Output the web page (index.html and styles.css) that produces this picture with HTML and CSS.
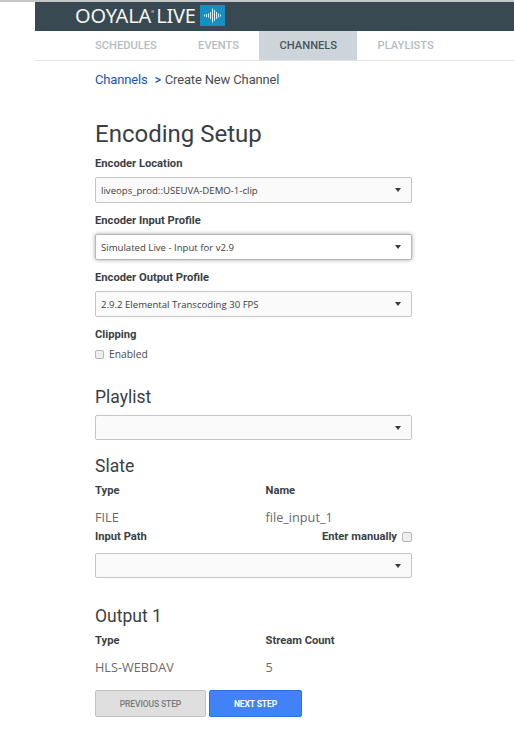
FILE: index.html
```html
<!DOCTYPE html>
<html lang="en">
<head>
<meta charset="utf-8">
<title>Create New Channel</title>
<link rel="stylesheet" href="styles.css">
</head>
<body>
<div class="topline"></div>
<div class="shell">
  <header class="brandbar">
    <span class="logo-text">OOYALA<sup class="reg">®</sup> LIVE</span>
    <span class="logo-mark">
      <svg width="25" height="21" viewBox="0 0 25 21" aria-hidden="true">
        <g stroke="#d5eef8" stroke-width="1" fill="none">
          <path d="M4.500 9.500v2M6.500 9v3M8.500 8.500v4M10.500 7v7M12.500 3.500v14M14.500 5v11M16.500 7v7M18.500 8.500v4M20.500 9.500v2"/>
        </g>
      </svg>
    </span>
  </header>
  <nav class="tabs">
    <a class="tab">SCHEDULES</a>
    <a class="tab">EVENTS</a>
    <a class="tab tab-active">CHANNELS</a>
    <a class="tab">PLAYLISTS</a>
  </nav>
</div>
<main class="content">
  <div class="crumbs"><a class="crumb-link">Channels</a><span class="crumb-sep">&gt;</span><span>Create New Channel</span></div>

  <h1 class="title">Encoding Setup</h1>
  <label class="label">Encoder Location</label>
  <div class="select"><span>liveops_prod::USEUVA-DEMO-1-clip</span><i class="caret"></i></div>
  <label class="label">Encoder Input Profile</label>
  <div class="select select-focus"><span>Simulated Live - Input for v2.9</span><i class="caret"></i></div>
  <label class="label">Encoder Output Profile</label>
  <div class="select"><span>2.9.2 Elemental Transcoding 30 FPS</span><i class="caret"></i></div>
  <label class="label">Clipping</label>
  <div class="check-row"><i class="check"></i><span>Enabled</span></div>

  <h2 class="heading heading-playlist">Playlist</h2>
  <div class="select select-empty"><i class="caret"></i></div>

  <h2 class="heading heading-slate">Slate</h2>
  <div class="pair pair-head"><span>Type</span><span>Name</span></div>
  <div class="pair pair-value"><span>FILE</span><span>file_input_1</span></div>
  <div class="path-row"><span>Input Path</span><span class="manual">Enter manually<i class="check"></i></span></div>
  <div class="select select-empty"><i class="caret"></i></div>

  <h2 class="heading heading-output">Output 1</h2>
  <div class="pair pair-head"><span>Type</span><span>Stream Count</span></div>
  <div class="pair pair-value"><span>HLS-WEBDAV</span><span>5</span></div>
  <div class="actions">
    <button class="btn btn-prev" type="button">PREVIOUS STEP</button>
    <button class="btn btn-next" type="button">NEXT STEP</button>
  </div>
</main>
</body>
</html>
```
FILE: styles.css
```css
* { box-sizing: border-box; }
html, body { margin: 0; padding: 0; background: #fff; }
body { font-family: Roboto, sans-serif; color: #3a3f44; overflow: hidden; height: 741px; }
.topline { height: 2px; background: #c4c6c7; }
.shell { margin-left: 35px; }
.brandbar { height: 29px; background: #394951; display: flex; align-items: flex-start; padding-left: 40px; }
.logo-text { font-family: "Noto Sans", sans-serif; font-weight: 400; font-size: 20px; letter-spacing: -0.200px; word-spacing: -2px; color: #f3f5f5; line-height: 28px; white-space: nowrap; }
.reg { font-size: 4px; vertical-align: 10px; line-height: 0; margin-right: -1px; }
.logo-mark { width: 25px; height: 21px; margin-left: 4px; margin-top: 3px; background: #1590c0; display: block; }
.logo-mark svg { display: block; }
.tabs { height: 30px; display: flex; border-bottom: 1px solid #e2e4e5; padding-left: 40px; }
.tab { height: 29px; padding: 0 20.250px; font-size: 11.150px; font-weight: 500; line-height: 29px; color: #b4bdc2; }
.tab:first-child { padding-left: 20px; padding-right: 21px; }
.tab-active { background: #cdd5da; color: #46555f; }
.content { margin-left: 95px; width: 317px; }
.crumbs { margin-top: 10px; height: 18px; font-size: 13px; letter-spacing: -0.150px; line-height: 18px; color: #4a4d50; display: flex; }
.crumb-link { color: #1a56b0; }
.crumb-sep { margin: 0 4px 0 7px; color: #1a56b0; font-size: 12px; font-weight: 500; }
.title { margin: 30px 0 7px; font-size: 24px; font-weight: 400; line-height: 30px; color: #3a3f44; }
.label { display: block; margin: 0; font-size: 11.200px; font-weight: 700; line-height: 16px; color: #3a3f44; }
.select { height: 26px; margin-top: 5px; margin-bottom: 10px; border: 1px solid #c3c5c6; border-radius: 2px; background: #fafafa; padding: 0 6px 0 5px; display: flex; align-items: center; justify-content: space-between; font-family: "Open Sans", sans-serif; font-size: 9.600px; color: #3d3d3d; }
.select-focus { border-color: #b5b7b8; box-shadow: 0 0 4px rgba(0, 0, 0, 0.350); background: #fff; }
.select-empty { justify-content: flex-end; }
.caret { width: 0; height: 0; border-left: 3px solid transparent; border-right: 3px solid transparent; border-top: 4px solid #3a3a3a; margin-right: 4.500px; }
.check-row { display: flex; align-items: center; height: 14px; margin-top: 4px; font-family: "Open Sans", sans-serif; font-size: 10.300px; color: #4a4a4a; gap: 5px; }
.check { display: block; width: 9px; height: 9px; border: 1px solid #b4b4b4; border-radius: 2px; background: #eeeeee; }
.heading { margin: 0; font-size: 17.500px; font-weight: 400; line-height: 24px; color: #3a3f44; }
.heading-playlist { margin-top: 24px; }
.heading-slate { margin-top: 14px; }
.heading-output { margin-top: 26px; }
.heading-playlist + .select { height: 25px; margin-top: 6px; margin-bottom: 0; }
.pair { display: grid; grid-template-columns: 170.500px 1fr; }
.pair-head { margin-top: 5px; font-size: 11.200px; font-weight: 700; line-height: 16px; color: #3a3f44; }
.pair-value { margin-top: 10px; font-family: "Open Sans", sans-serif; font-size: 12.700px; line-height: 16px; color: #6a6a6a; }
.path-row { display: flex; justify-content: space-between; margin-top: 4px; font-size: 11.200px; font-weight: 700; line-height: 16px; color: #3a3f44; }
.manual { display: flex; align-items: center; gap: 5px; }
.manual .check { width: 10px; height: 10px; }
.path-row + .select { height: 25px; margin-top: 8px; margin-bottom: 0; }
.actions { display: flex; gap: 3px; margin-top: 15px; }
.btn { height: 27px; border-radius: 2px; font-family: Roboto, sans-serif; font-size: 8.500px; letter-spacing: -0.100px; font-weight: 700; padding: 0; }
.btn-prev { width: 111px; background: #dfdfdf; border: 1px solid #c2c2c2; color: #77797b; font-weight: 500; }
.btn-next { width: 93px; background: #4183f7; border: 1px solid #2c6fe4; color: #fff; }
```
